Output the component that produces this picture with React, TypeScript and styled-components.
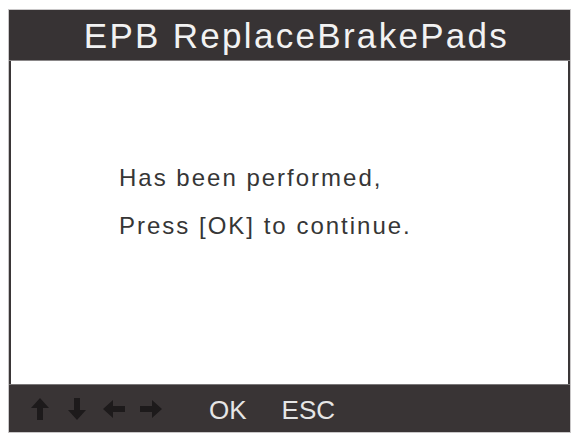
import React from 'react';
import styled, { createGlobalStyle } from 'styled-components';

const GlobalStyle = createGlobalStyle`
  html, body {
    margin: 0;
    padding: 0;
    background: #ffffff;
  }
  body {
    font-family: "Liberation Sans", Arial, sans-serif;
  }
`;

type Dir = 'up' | 'down' | 'left' | 'right';

const rotation: Record<Dir, number> = { up: 0, right: 90, down: 180, left: 270 };

const Arrow = ({ dir }: { dir: Dir }) => (
  <ArrowSvg viewBox="0 0 22 24" style={{ transform: `rotate(${rotation[dir]}deg)` }}>
    <path d="M11 1 L20 11 L14 11 L14 23 L8 23 L8 11 L2 11 Z" fill="#1d1a1b" />
  </ArrowSvg>
);

const App = () => {
  return (
    <>
      <GlobalStyle />
      <Page>
        <Screen>
          <Header>EPB ReplaceBrakePads</Header>
          <Body>
            <Line>Has been performed,</Line>
            <Line>Press [OK] to continue.</Line>
          </Body>
          <Footer>
            <Arrows>
              <Arrow dir="up" />
              <Arrow dir="down" />
              <Arrow dir="left" />
              <Arrow dir="right" />
            </Arrows>
            <Keys>
              <Key>OK</Key>
              <Key>ESC</Key>
            </Keys>
          </Footer>
        </Screen>
      </Page>
    </>
  );
};

export default App;

const Page = styled.div`
  width: 576px;
  height: 435px;
  padding: 10px 6px 3px 9px;
  box-sizing: border-box;
`;

const Screen = styled.div`
  width: 561px;
  height: 422px;
  display: flex;
  flex-direction: column;
  box-shadow: 0 0 0 1px #c9c7c8;
`;

const Header = styled.div`
  height: 51px;
  flex: none;
  background: #373334;
  color: #f2f2f2;
  font-size: 35px;
  letter-spacing: 2.3px;
  line-height: 51px;
  text-align: center;
  padding-left: 14px;
  box-sizing: border-box;
  border-bottom: 1px solid #8a8788;
`;

const Body = styled.div`
  flex: 1;
  background: #ffffff;
  border-left: 2px solid #3a3637;
  border-right: 2px solid #3a3637;
  padding: 93px 0 0 108px;
`;

const Line = styled.div`
  font-size: 24px;
  line-height: 48px;
  letter-spacing: 2px;
  color: #363636;
`;

const Footer = styled.div`
  height: 48px;
  flex: none;
  background: #393435;
  display: flex;
  align-items: center;
  border-top: 1px solid #7a7778;
  box-sizing: border-box;
  padding-left: 20px;
`;

const Arrows = styled.div`
  display: flex;
  align-items: center;
  gap: 15px;
`;

const ArrowSvg = styled.svg`
  width: 22px;
  height: 24px;
`;

const Keys = styled.div`
  display: flex;
  gap: 35px;
  margin-left: 47px;
`;

const Key = styled.span`
  font-size: 26px;
  color: #e6e6e6;
  line-height: 1;
  padding-top: 2px;
`;
